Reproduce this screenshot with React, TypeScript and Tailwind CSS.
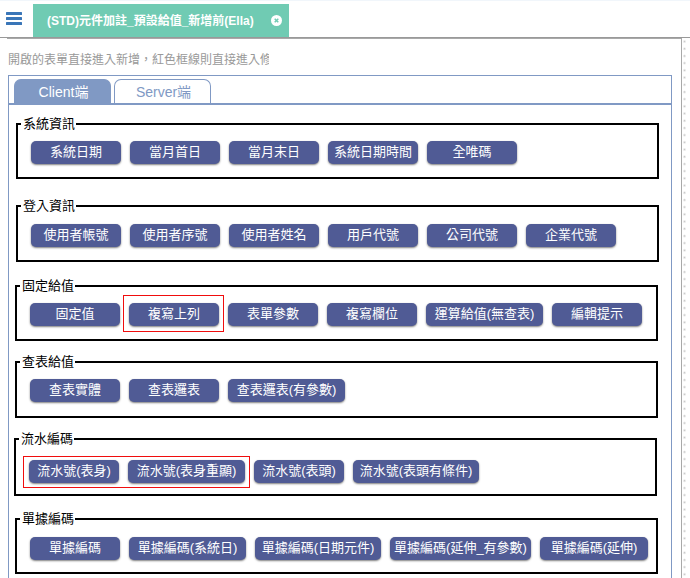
import { useState } from "react";

type Item = { label: string; width: string };
type Group = {
  title: string;
  frame: string;
  marked?: [number, number];
  mark?: string;
  items: Item[];
};

const W90 = "w-[90px]";
const W108 = "w-[108px]";
const W117 = "w-[117px]";
const W126 = "w-[126px]";
const W141 = "w-[141px]";

const groups: Group[] = [
  {
    title: "系統資訊",
    frame: "mt-[11px] ml-[7px] mr-3 pt-[9px] pb-[13px]",
    items: [
      { label: "系統日期", width: W90 },
      { label: "當月首日", width: W90 },
      { label: "當月末日", width: W90 },
      { label: "系統日期時間", width: W90 },
      { label: "全唯碼", width: W90 },
    ],
  },
  {
    title: "登入資訊",
    frame: "mt-[19px] ml-[7px] mr-3 pt-2.5 pb-[13px]",
    items: [
      { label: "使用者帳號", width: W90 },
      { label: "使用者序號", width: W90 },
      { label: "使用者姓名", width: W90 },
      { label: "用戶代號", width: W90 },
      { label: "公司代號", width: W90 },
      { label: "企業代號", width: W90 },
    ],
  },
  {
    title: "固定給值",
    frame: "mt-4 ml-1.5 mr-[13px] pt-[9px] pb-[13px]",
    marked: [1, 2],
    mark: "-top-2 -bottom-1.5 -left-1.5 -right-[5px]",
    items: [
      { label: "固定值", width: W90 },
      { label: "複寫上列", width: W90 },
      { label: "表單參數", width: W90 },
      { label: "複寫欄位", width: W90 },
      { label: "運算給值(無查表)", width: W117 },
      { label: "編輯提示", width: W90 },
    ],
  },
  {
    title: "查表給值",
    frame: "mt-[13px] ml-1.5 mr-[13px] pt-[9px] pb-3.5",
    items: [
      { label: "查表實體", width: W90 },
      { label: "查表邏表", width: W90 },
      { label: "查表邏表(有參數)", width: W117 },
    ],
  },
  {
    title: "流水編碼",
    frame: "mt-[13px] ml-[5px] mr-3.5 pt-[13px] pb-[11px]",
    marked: [0, 2],
    mark: "-top-1 -bottom-[5px] -left-1.5 -right-[5px]",
    items: [
      { label: "流水號(表身)", width: W90 },
      { label: "流水號(表身重顯)", width: W117 },
      { label: "流水號(表頭)", width: W90 },
      { label: "流水號(表頭有條件)", width: W126 },
    ],
  },
  {
    title: "單據編碼",
    frame: "mt-[15px] ml-1.5 mr-[13px] pt-2.5 pb-3",
    items: [
      { label: "單據編碼", width: W90 },
      { label: "單據編碼(系統日)", width: W117 },
      { label: "單據編碼(日期元件)", width: W126 },
      { label: "單據編碼(延伸_有參數)", width: W141 },
      { label: "單據編碼(延伸)", width: W108 },
    ],
  },
];

function ActionButton({ label, width }: Item) {
  return (
    <button
      type="button"
      className={`${width} h-[23px] shrink-0 rounded-[5px] bg-[#505b95] pb-0.5 text-center text-[13px] leading-5 whitespace-nowrap text-white shadow-[0_1px_2px_rgba(0,0,0,0.5)]`}
    >
      {label}
    </button>
  );
}

function GroupBox({ title, frame, marked, mark, items }: Group) {
  const [start, end] = marked ?? [0, 0];
  const render = (list: Item[]) => list.map((item) => <ActionButton key={item.label} {...item} />);
  return (
    <fieldset className={`${frame} min-w-0 border-2 border-black px-[3px]`}>
      <legend className="h-4 pr-px pl-0.5 text-[13px] leading-[15px] text-black">{title}</legend>
      <div className="flex flex-wrap gap-[9px] pl-2.5">
        {render(items.slice(0, start))}
        {marked && (
          <div className="relative flex gap-[9px]">
            {render(items.slice(start, end))}
            <span className={`${mark} pointer-events-none absolute border border-[#f00d0d]`} />
          </div>
        )}
        {render(items.slice(end))}
      </div>
    </fieldset>
  );
}

function DottedEdge() {
  return (
    <svg className="w-2 shrink-0 self-stretch" aria-hidden="true">
      <defs>
        <pattern id="dots" width="8" height="36" patternUnits="userSpaceOnUse">
          {[3.5, 10.7, 17.9, 25.1, 32.3].map((y) => (
            <g key={y}>
              <circle cx="2.5" cy={y} r="1.5" fill="#e9e9e9" />
              <circle cx="2.5" cy={y} r="0.6" fill="#c6c6c6" />
            </g>
          ))}
        </pattern>
      </defs>
      <rect width="8" height="100%" fill="url(#dots)" />
    </svg>
  );
}

export default function App() {
  const [tab, setTab] = useState("Client端");

  return (
    <div className="flex min-h-screen flex-col bg-white font-['Liberation_Sans','Noto_Sans_CJK_TC',sans-serif]">
      <header className="flex h-[38px] items-end border-t border-b border-t-[#f1f6fb] border-b-[#999999]">
        <button type="button" aria-label="選單" className="ml-1.5 h-[25px] w-4">
          <svg width="16" height="13" viewBox="0 0 16 13" fill="#3a76b8" className="block -translate-y-1.5">
            <rect width="16" height="3" rx="0.5" />
            <rect y="5" width="16" height="3" rx="0.5" />
            <rect y="10" width="16" height="3" rx="0.5" />
          </svg>
        </button>
        <div className="ml-[11px] flex h-[33px] w-64 items-center justify-between bg-[#70cbb3] pr-[7px] pl-3.5 text-white">
          <span className="text-[12px] leading-4 font-bold whitespace-nowrap">
            (STD)元件加註_預設給值_新增前(Ella)
          </span>
          <button type="button" aria-label="關閉">
            <svg width="11" height="11" viewBox="0 0 11 11" className="block">
              <circle cx="5.5" cy="5.5" r="5.5" fill="#fff" />
              <path d="M3.7 3.7l3.6 3.6M7.3 3.7L3.7 7.3" stroke="#70cbb3" strokeWidth="1.5" />
            </svg>
          </button>
        </div>
      </header>

      <div className="flex flex-1 pl-[7px]">
        <main className="flex min-w-0 flex-1 flex-col border-t border-r border-[#a9a9a9] pr-[9px] pl-px">
          <p className="mt-[13px] w-[261px] overflow-hidden text-[12px] leading-4 whitespace-nowrap text-[#999999]">
            開啟的表單直接進入新增，紅色框線則直接進入修
          </p>

          <section className="mt-[7px] flex-1 border border-b-0 border-[#8099c4]">
            <div role="tablist" className="flex gap-[3px] border-b-2 border-[#8099c4] pt-[3px] pl-[5px]">
              {["Client端", "Server端"].map((name) => (
                <button
                  key={name}
                  type="button"
                  role="tab"
                  aria-selected={tab === name}
                  onClick={() => setTab(name)}
                  className={`h-6 w-[97px] rounded-t-[7px] border border-b-0 border-[#8099c4] pl-0.5 text-[14px] leading-6 ${
                    tab === name ? "bg-[#8099c4] text-white" : "bg-white text-[#8099c4]"
                  }`}
                >
                  {name}
                </button>
              ))}
            </div>
            {groups.map((group) => (
              <GroupBox key={group.title} {...group} />
            ))}
          </section>
        </main>
        <DottedEdge />
      </div>
    </div>
  );
}
